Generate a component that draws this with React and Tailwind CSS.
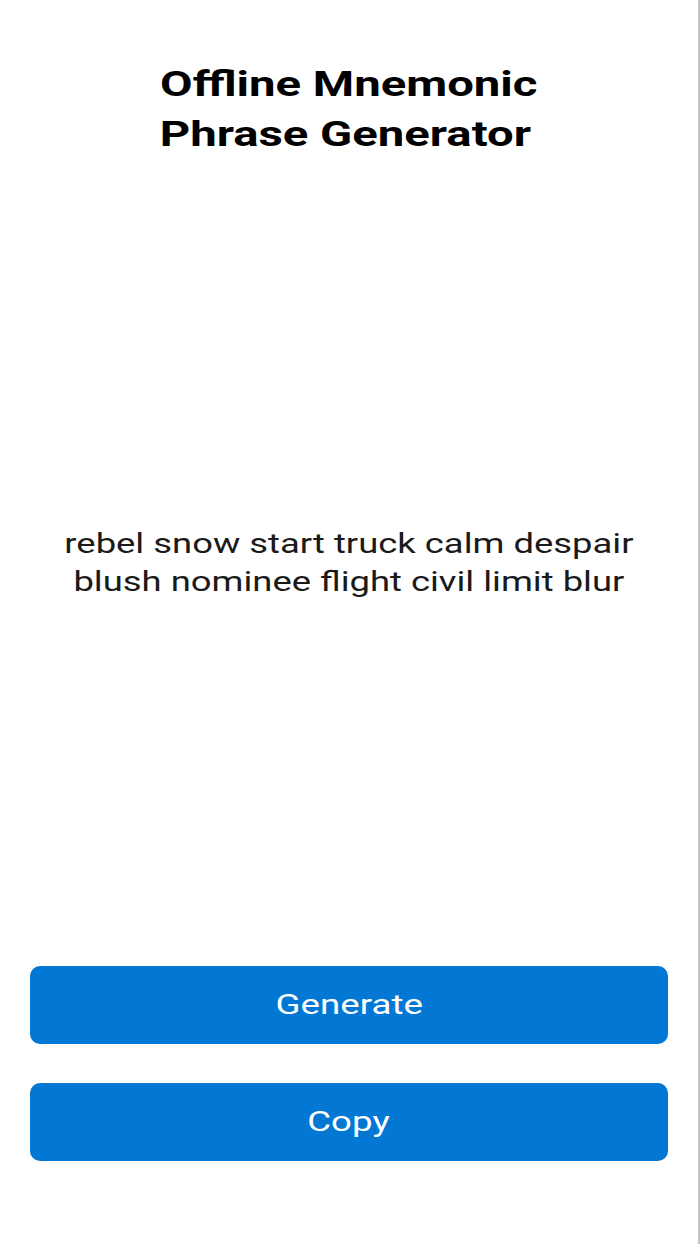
const lines = ['rebel snow start truck calm despair', 'blush nominee flight civil limit blur'];

// Le rendu de référence est étiré horizontalement : on compense avec scale-x.
export default function App() {
  return (
    <div
      className="w-[700px] h-[1244px] flex flex-col bg-white border-r-2 border-[#c4c4c4]"
      style={{ fontFamily: 'Roboto, "Noto Sans", sans-serif' }}
    >
      <h1 className="pt-[60px] flex flex-col items-center text-[35px] leading-[50px] font-bold text-black">
        <span className="scale-x-[1.35]">Offline Mnemonic</span>
        <span className="scale-x-[1.35] pr-[6px]">Phrase Generator</span>
      </h1>

      <div className="flex-1 flex flex-col items-center justify-center text-[28px] leading-[38px] text-[#1a1a1a]">
        {lines.map((l) => (
          <span key={l} className="scale-x-[1.3]">{l}</span>
        ))}
      </div>

      <div className="flex flex-col gap-[39px] px-[30px] pb-[83px]">
        <button className="h-[78px] rounded-[10px] bg-[#0277d4] text-white text-[28px]">
          <span className="inline-block scale-x-[1.31]">Generate</span>
        </button>
        <button className="h-[78px] rounded-[10px] bg-[#0277d4] text-white text-[28px]">
          <span className="inline-block scale-x-[1.31]">Copy</span>
        </button>
      </div>
    </div>
  );
}
